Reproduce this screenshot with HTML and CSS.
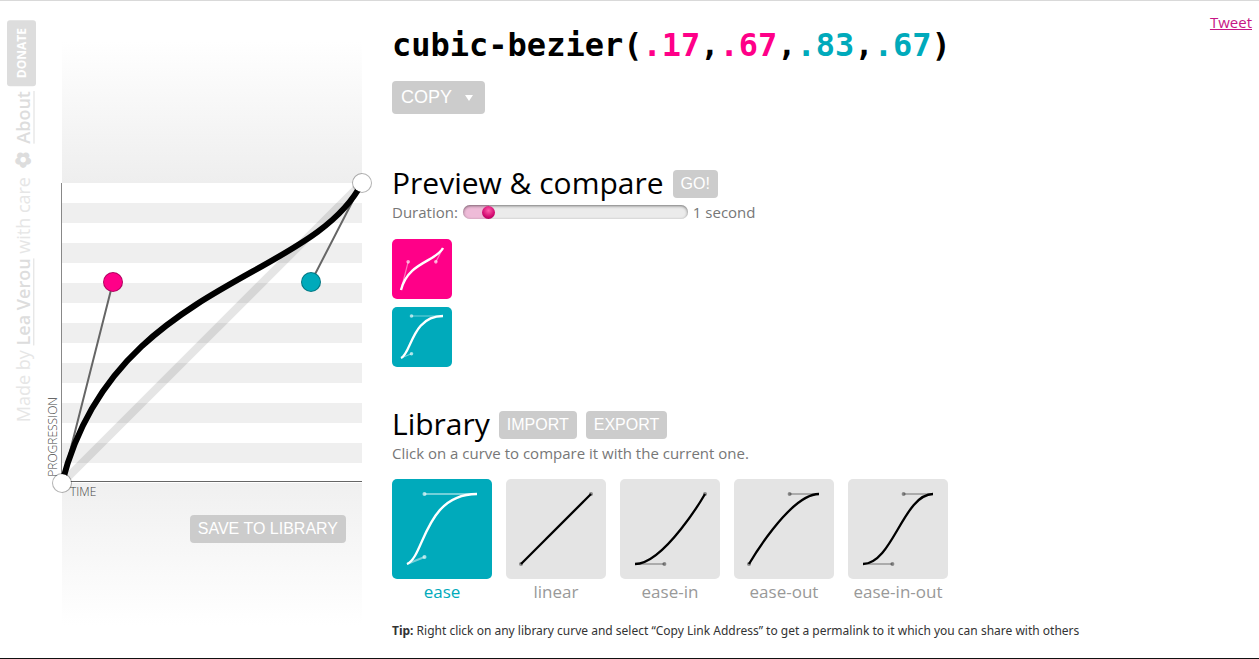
FILE: index.html
```html
<!DOCTYPE html>
<html lang="en">
<head>
<meta charset="utf-8">
<title>cubic-bezier(.17,.67,.83,.67)</title>
<link rel="stylesheet" href="styles.css">
</head>
<body>
<div class="page">
  <footer class="credits">
    <p class="credits-text">Made by <a href="#lea">Lea Verou</a> with care <span class="flower">✿</span> <a href="#about">About</a></p>
    <button class="donate" type="button">DONATE</button>
  </footer>

  <section class="graph" aria-label="Curve editor">
    <div class="fade fade-top"></div>
    <div class="plane">
      <svg class="curve" viewBox="0 0 300 300" aria-hidden="true">
        <path class="diagonal" d="M0 300 300 0"/>
        <path class="arm" d="M0 300 51 99M300 0 249 99"/>
        <path class="bezier" d="M0 300C51 99 249 99 300 0"/>
      </svg>
      <span class="axis axis-y">PROGRESSION</span>
      <span class="axis axis-x">TIME</span>
      <button class="handle p0" type="button" aria-label="Start point"></button>
      <button class="handle p1" type="button" aria-label="First control point"></button>
      <button class="handle p2" type="button" aria-label="Second control point"></button>
      <button class="handle p3" type="button" aria-label="End point"></button>
    </div>
    <div class="fade fade-bottom">
      <button class="btn" type="button">SAVE TO LIBRARY</button>
    </div>
  </section>

  <main class="content">
    <h1>cubic-bezier(<span class="pink">.17</span>,<span class="pink">.67</span>,<span class="teal">.83</span>,<span class="teal">.67</span>)</h1>
    <button class="btn copy" type="button" aria-haspopup="true">COPY
      <svg class="caret" viewBox="0 0 8 6" aria-hidden="true"><path d="M0 0H8L4 6Z"/></svg>
    </button>

    <section class="preview">
      <div class="heading">
        <h2>Preview &amp; compare</h2>
        <button class="btn" type="button">GO!</button>
      </div>
      <div class="duration">
        <label for="duration">Duration:</label>
        <input id="duration" type="range" min="0" max="100" value="9">
        <output for="duration">1 second</output>
      </div>
      <div class="compare">
        <svg class="tile small pink-bg" viewBox="0 0 100 100" role="img" aria-label="Current curve">
          <path class="stem" d="M15 85 26.9 38.1M85 15 73.1 38.1"/>
          <circle class="dot" cx="26.9" cy="38.1" r="3"/><circle class="dot" cx="73.1" cy="38.1" r="3"/>
          <path class="line" d="M15 85C26.9 38.1 73.1 38.1 85 15"/>
        </svg>
        <svg class="tile small teal-bg" viewBox="0 0 100 100" role="img" aria-label="ease">
          <path class="stem" d="M15 85 32.5 78M85 15H32.5"/>
          <circle class="dot" cx="32.5" cy="78" r="3"/><circle class="dot" cx="32.5" cy="15" r="3"/>
          <path class="line" d="M15 85C32.5 78 32.5 15 85 15"/>
        </svg>
      </div>
    </section>

    <section class="library">
      <div class="heading">
        <h2>Library</h2>
        <button class="btn" type="button">IMPORT</button>
        <button class="btn" type="button">EXPORT</button>
      </div>
      <p class="hint">Click on a curve to compare it with the current one.</p>
      <div class="curves">
        <a class="item selected" href="#ease">
          <svg class="tile teal-bg" viewBox="0 0 100 100" aria-hidden="true">
            <path class="stem" d="M15 85 32.5 78M85 15H32.5"/>
            <circle class="dot" cx="32.5" cy="78" r="2"/><circle class="dot" cx="32.5" cy="15" r="2"/>
            <path class="line" d="M15 85C32.5 78 32.5 15 85 15"/>
          </svg>
          ease
        </a>
        <a class="item" href="#linear">
          <svg class="tile" viewBox="0 0 100 100" aria-hidden="true">
            <circle class="dot" cx="15" cy="85" r="2"/><circle class="dot" cx="85" cy="15" r="2"/>
            <path class="line" d="M15 85 85 15"/>
          </svg>
          linear
        </a>
        <a class="item" href="#ease-in">
          <svg class="tile" viewBox="0 0 100 100" aria-hidden="true">
            <path class="stem" d="M15 85H44.4"/>
            <circle class="dot" cx="44.4" cy="85" r="2"/><circle class="dot" cx="85" cy="15" r="2"/>
            <path class="line" d="M15 85C44.4 85 85 15 85 15"/>
          </svg>
          ease-in
        </a>
        <a class="item" href="#ease-out">
          <svg class="tile" viewBox="0 0 100 100" aria-hidden="true">
            <path class="stem" d="M85 15H55.6"/>
            <circle class="dot" cx="15" cy="85" r="2"/><circle class="dot" cx="55.6" cy="15" r="2"/>
            <path class="line" d="M15 85C15 85 55.6 15 85 15"/>
          </svg>
          ease-out
        </a>
        <a class="item" href="#ease-in-out">
          <svg class="tile" viewBox="0 0 100 100" aria-hidden="true">
            <path class="stem" d="M15 85H44.4M85 15H55.6"/>
            <circle class="dot" cx="44.4" cy="85" r="2"/><circle class="dot" cx="55.6" cy="15" r="2"/>
            <path class="line" d="M15 85C44.4 85 55.6 15 85 15"/>
          </svg>
          ease-in-out
        </a>
      </div>
      <p class="tip"><strong>Tip:</strong> Right click on any library curve and select “Copy Link Address” to get a permalink to it which you can share with others</p>
    </section>
  </main>

  <a class="tweet" href="#tweet">Tweet</a>
</div>
</body>
</html>
```

FILE: styles.css
```css
* {
  box-sizing: border-box;
}

body {
  margin: 0;
  background: #fff;
  color: #000;
  font: 15px/20px "Open Sans", "Noto Sans", sans-serif;
}

h1, h2, p {
  margin: 0;
}

button {
  border: 0;
  padding: 0;
  cursor: pointer;
}

.page {
  display: grid;
  grid-template-columns: 62px 300px 1fr auto;
  min-height: 100vh;
  border-top: 1px solid #d9d9d9;
  border-bottom: 1px solid #111;
}

.pink { color: #f08; }
.teal { color: #0ab; }

/* Rotated credits strip */
.credits {
  display: flex;
  flex-direction: column-reverse;
  justify-content: flex-end;
  align-items: flex-start;
  gap: 5px;
  padding: 19px 0 0 7px;
}

.credits-text,
.donate {
  writing-mode: vertical-rl;
  transform: rotate(180deg);
}

.credits-text {
  margin-left: 2px;
  color: #e6e6e6;
  font-size: 18px;
  line-height: 28px;
  white-space: nowrap;
}

.credits-text a {
  color: #ddd;
  font-weight: 600;
}

.flower {
  font-family: "DejaVu Sans", sans-serif;
  font-size: 20px;
  font-weight: 700;
  color: #ddd;
  -webkit-text-stroke: 1px #ddd;
}

.donate {
  width: 29px;
  padding: 8px 0;
  border-radius: 3px;
  background: #ddd;
  color: #fff;
  font: 700 12px/29px "Open Sans", sans-serif;
}

/* Curve editor */
.graph {
  padding-top: 32px;
}

.fade {
  height: 150px;
}

.fade-top {
  background: linear-gradient(to top, #eee, #fff 142px);
}

.fade-bottom {
  display: flex;
  justify-content: flex-end;
  align-items: flex-start;
  padding: 32px 16px 0;
  background: linear-gradient(#f0f0f0, #fff 142px);
}

.plane {
  position: relative;
  aspect-ratio: 1;
  background: linear-gradient(#666, #666) 0 298px / 100% 1px no-repeat,
    repeating-linear-gradient(#fff 0 20px, #efefef 20px 40px);
  box-shadow: -1px 0 #888;
}

.curve {
  display: block;
  width: 100%;
  overflow: visible;
  fill: none;
}

.diagonal {
  stroke: rgba(0, 0, 0, .1);
  stroke-width: 8;
}

.arm {
  stroke: #666;
  stroke-width: 2;
}

.bezier {
  stroke: #000;
  stroke-width: 6;
}

.axis {
  position: absolute;
  color: #444;
  font-size: 12px;
  font-weight: 300;
  line-height: 18px;
}

.axis-x {
  top: 300px;
  left: 8px;
}

.axis-y {
  right: 100%;
  bottom: 6px;
  writing-mode: vertical-rl;
  transform: rotate(180deg);
}

.handle {
  position: absolute;
  width: 20px;
  height: 20px;
  margin: -10px;
  border: 1px solid rgba(0, 0, 0, .3);
  border-radius: 50%;
}

.p0 { left: 0; top: 100%; background: #fff; background-clip: padding-box; }
.p1 { left: 17%; top: 33%; background: #f08; }
.p2 { left: 83%; top: 33%; background: #0ab; }
.p3 { left: 100%; top: 0; background: #fff; background-clip: padding-box; }

/* Buttons */
.btn {
  padding: 0 8px;
  border-radius: 4px;
  background: #ccc;
  color: #fff;
  font: 16px/28px "Liberation Sans", Arial, sans-serif;
}

.copy {
  display: flex;
  align-items: center;
  gap: 13px;
  padding: 0 12px 0 9px;
  font-size: 18px;
  line-height: 33px;
}

.caret {
  width: 8px;
  height: 6px;
  fill: #fff;
}

/* Main column */
.content {
  padding: 24px 0 0 30px;
}

h1 {
  margin-bottom: 16px;
  font: 700 32px/40px "DejaVu Sans Mono", monospace;
}

.heading {
  display: flex;
  align-items: center;
  gap: 9px;
}

.heading .btn {
  margin-top: 2px;
}

h2 {
  font-size: 30px;
  font-weight: 400;
  line-height: 38px;
}

.preview {
  margin-top: 50px;
}

.duration {
  display: flex;
  align-items: center;
  gap: 5px;
  margin-bottom: 17px;
  color: #777;
}

#duration {
  appearance: none;
  width: 225px;
  height: 14px;
  margin: 0;
  border-radius: 7px;
  background: linear-gradient(90deg, #eebbd8 26px, #ebebeb 26px);
  box-shadow: inset 0 1px 3px rgba(0, 0, 0, .5);
}

#duration::-webkit-slider-thumb {
  appearance: none;
  width: 13px;
  height: 13px;
  border-radius: 50%;
  background: radial-gradient(circle at 50% 35%, #ff5cab, #d1086f 60%, #8c0048);
}

.compare {
  display: flex;
  flex-direction: column;
  gap: 8px;
}

.tile {
  display: block;
  width: 100px;
  height: 100px;
  border-radius: 5px;
  background: #e4e4e4;
  fill: none;
  color: #000;
}

.small {
  width: 60px;
  height: 60px;
}

.pink-bg { background: #f08; color: #fff; }
.teal-bg { background: #0ab; color: #fff; }

.stem {
  stroke: currentColor;
  stroke-width: 2;
  opacity: .25;
}

.teal-bg .stem,
.pink-bg .stem {
  opacity: .45;
}

.dot {
  fill: currentColor;
  opacity: .4;
}

.teal-bg .dot,
.pink-bg .dot {
  opacity: .65;
}

.line {
  stroke: currentColor;
  stroke-width: 2.3;
}

.small .line {
  stroke-width: 4;
}

.library {
  margin-top: 38px;
}

.hint {
  margin-bottom: 16px;
  color: #777;
}

.curves {
  display: flex;
  flex-wrap: wrap;
  gap: 14px;
}

.item {
  width: 100px;
  color: #999;
  font-size: 17px;
  line-height: 26px;
  text-align: center;
  text-decoration: none;
}

.selected {
  color: #0ab;
}

.tip {
  margin-top: 16px;
  color: #333;
  font-family: "Noto Sans", sans-serif;
  font-size: 12px;
}

.tweet {
  padding: 11px 7px 0 0;
  color: #c71585;
}
```
